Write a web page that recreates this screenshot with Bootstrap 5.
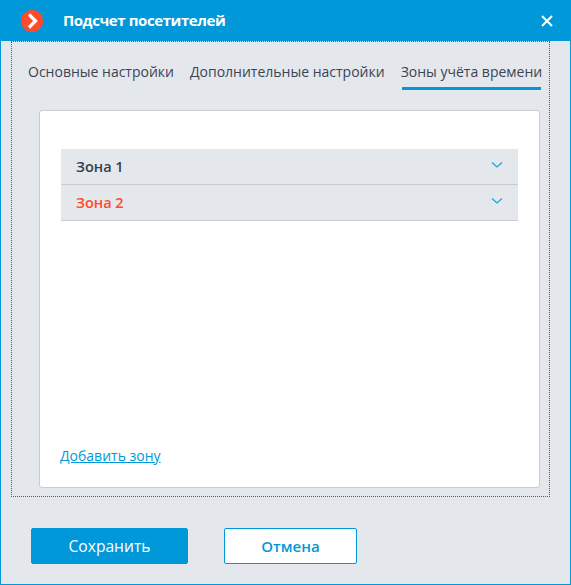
<!DOCTYPE html>
<html lang="ru">
<head>
<meta charset="utf-8">
<title>Подсчет посетителей</title>
<link href="https://cdn.jsdelivr.net/npm/bootstrap@5.3.0/dist/css/bootstrap.min.css" rel="stylesheet">
<style>
html,body{height:100%;margin:0;background:#e4e8ed;overflow:hidden}
body{font-family:"Open Sans","Noto Sans",sans-serif;font-size:15px;color:#3a4454}
.dlg{width:571px;height:585px;border:1px solid #0098d8;border-top:0;background:#e4e8ed}
.dlg-head{height:41px;margin:0 -1px;background:#0098d8;color:#fff;padding-left:21px;padding-right:18px}
.dlg-logo{width:22px;height:22px;margin-right:20px;display:block}
.dlg-title{font-size:15px;font-weight:700;letter-spacing:-.42px}
.dlg-x{width:12px;height:12px;display:block}
.dlg-body{width:539px;height:456px;margin-left:10px;border:1px dotted #55595f;padding:0 9px 8px 27px}
.tab-row{height:68px;padding-top:20px;margin-left:-11px;margin-right:-10px;gap:16px}
.tab-item{font-size:14px;line-height:20px;height:28px;color:#3a4454;white-space:nowrap;text-decoration:none;position:relative}
.tab-item.on::after{content:"";position:absolute;left:1.5px;right:1px;bottom:0;height:3px;background:#0098d8}
.zone-card{height:378px;background:#fff;border:1px solid #c9ccd3;border-radius:3px;padding:38px 21px 21px 20px}
.zone-row{height:36px;margin-left:1px;background:#e4e8ed;border-bottom:1px solid #c9ccd3;padding:0 15px;font-weight:600;font-size:14.5px;color:#333f50}
.zone-row.bad{color:#ff4b2b}
.zone-row svg{width:12px;height:8px;display:block;margin-top:-3px}
.zone-link{color:#0098d8;font-size:14px;line-height:20px}
.foot{padding:31px 0 0 30px;gap:36px}
.btn-save,.btn-cancel{height:36px;border-radius:2px;padding:0;line-height:34px}
.btn-save{width:157px;font-size:15.6px;background:#0098d8;border:1px solid #0098d8;color:#fff}
.btn-cancel{width:133px;font-size:15px;background:#fff;border:1px solid #0098d8;color:#0098d8;font-weight:600}
</style>
</head>
<body>
<div class="dlg">
  <div class="dlg-head d-flex align-items-center">
    <svg class="dlg-logo" viewBox="0 0 22 22"><circle cx="11" cy="11" r="11" fill="#ff4b2b"/><path d="M8 4.500 14.500 11 8 17.500" fill="none" stroke="#fff" stroke-width="3.200"/></svg>
    <span class="dlg-title flex-grow-1">Подсчет посетителей</span>
    <svg class="dlg-x" viewBox="0 0 12 12"><path d="M1 1 11 11M11 1 1 11" stroke="#fff" stroke-width="2"/></svg>
  </div>
  <div class="dlg-body">
    <div class="tab-row d-flex">
      <a class="tab-item" href="#">Основные настройки</a>
      <a class="tab-item" href="#">Дополнительные настройки</a>
      <a class="tab-item on" href="#">Зоны учёта времени</a>
    </div>
    <div class="zone-card d-flex flex-column">
      <div class="zone-row d-flex align-items-center justify-content-between"><span>Зона 1</span><svg viewBox="0 0 12 8"><path d="M1 1.500 6 6 11 1.500" fill="none" stroke="#1ba6e0" stroke-width="1.300"/></svg></div>
      <div class="zone-row bad d-flex align-items-center justify-content-between"><span>Зона 2</span><svg viewBox="0 0 12 8"><path d="M1 1.500 6 6 11 1.500" fill="none" stroke="#1ba6e0" stroke-width="1.300"/></svg></div>
      <div class="mt-auto"><a class="zone-link" href="#">Добавить зону</a></div>
    </div>
  </div>
  <div class="foot d-flex">
    <button type="button" class="btn btn-save">Сохранить</button>
    <button type="button" class="btn btn-cancel">Отмена</button>
  </div>
</div>
<script src="https://cdn.jsdelivr.net/npm/bootstrap@5.3.0/dist/js/bootstrap.bundle.min.js"></script>
</body>
</html>
